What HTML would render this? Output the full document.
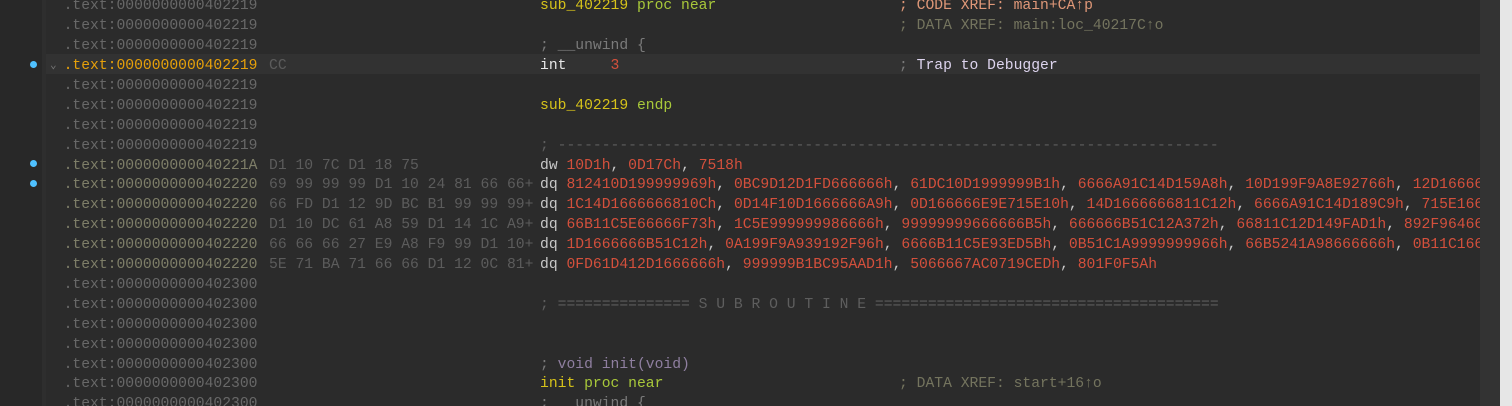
<!DOCTYPE html>
<html><head><meta charset="utf-8"><style>
html,body{margin:0;padding:0;}
body{width:1512px;height:406px;overflow:hidden;background:#2b2b2b;position:relative;font-family:"Liberation Mono","DejaVu Sans Mono",monospace;font-size:14.7px;}
#gut{position:absolute;left:0;top:0;width:42px;height:406px;background:#282828;}
#gut2{position:absolute;left:42px;top:0;width:4px;height:406px;background:#2e2e2e;}
#view{position:absolute;left:46px;top:0;width:1434px;height:406px;overflow:hidden;}
#sb{position:absolute;left:1480px;top:0;width:20px;height:406px;background:#333;}
#sb2{position:absolute;left:1500px;top:0;width:12px;height:406px;background:#e6e6e6;}
.r{position:absolute;left:0;height:19.9px;line-height:19.9px;white-space:pre;width:1434px;}
.hl{background:#323232;}
.a,.b,.c,.m{top:3px;}
.a{position:absolute;left:17.6px;color:#686868;}
.ad{color:#7e7e68;}
.ao{color:#e6a00a;}
.b{position:absolute;left:223px;color:#5c5c5c;}
.c{position:absolute;left:494px;color:#c8c8c8;}
.m{position:absolute;left:853px;}
.y{color:#d6c21a}.g{color:#a8c83a}.n{color:#d4503c}.w{color:#e6e6e6}.cm{color:#7a7a7a}.co{color:#e09878}.cd{color:#74745e}.lv{color:#ddd4ee}.pu{color:#8f7fa0}
.dot{position:absolute;left:30px;width:7px;height:7px;border-radius:50%;background:#4fc1ff;}
</style></head><body>
<div id="gut"></div><div id="gut2"></div>
<div class="dot" style="top:61px"></div>
<div class="dot" style="top:160px"></div>
<div class="dot" style="top:180px"></div>
<div id="view">
<div class="r" style="top:-5.7px"><span class="a">.text:0000000000402219</span><span class="c"><span class="y">sub_402219</span> <span class="g">proc near</span></span><span class="m co">; CODE XREF: main+CA↑p</span></div>
<div class="r" style="top:14.2px"><span class="a">.text:0000000000402219</span><span class="m cd">; DATA XREF: main:loc_40217C↑o</span></div>
<div class="r" style="top:34.1px"><span class="a">.text:0000000000402219</span><span class="c cm">; __unwind {</span></div>
<div class="r hl" style="top:54px"><span style="position:absolute;left:4px;top:3px;color:#777;font-size:11px">⌄</span><span class="a ao">.text:0000000000402219</span><span class="b">CC</span><span class="c"><span class="w">int</span>     <span class="n">3</span></span><span class="m"><span class="cm">;</span> <span class="lv">Trap to Debugger</span></span></div>
<div class="r" style="top:73.9px"><span class="a">.text:0000000000402219</span></div>
<div class="r" style="top:93.8px"><span class="a">.text:0000000000402219</span><span class="c"><span class="y">sub_402219</span> <span class="g">endp</span></span></div>
<div class="r" style="top:113.7px"><span class="a">.text:0000000000402219</span></div>
<div class="r" style="top:133.6px"><span class="a">.text:0000000000402219</span><span class="c" style="color:#5e5e5e">; ---------------------------------------------------------------------------</span></div>
<div class="r" style="top:153.5px"><span class="a ad">.text:000000000040221A</span><span class="b">D1 10 7C D1 18 75</span><span class="c">dw <span class="n">10D1h</span>, <span class="n">0D17Ch</span>, <span class="n">7518h</span></span></div>
<div class="r" style="top:173.4px"><span class="a ad">.text:0000000000402220</span><span class="b">69 99 99 99 D1 10 24 81 66 66+</span><span class="c">dq <span class="n">812410D199999969h</span>, <span class="n">0BC9D12D1FD666666h</span>, <span class="n">61DC10D1999999B1h</span>, <span class="n">6666A91C14D159A8h</span>, <span class="n">10D199F9A8E92766h</span>, <span class="n">12D1666666666666h</span></span></div>
<div class="r" style="top:193.3px"><span class="a ad">.text:0000000000402220</span><span class="b">66 FD D1 12 9D BC B1 99 99 99+</span><span class="c">dq <span class="n">1C14D1666666810Ch</span>, <span class="n">0D14F10D1666666A9h</span>, <span class="n">0D166666E9E715E10h</span>, <span class="n">14D1666666811C12h</span>, <span class="n">6666A91C14D189C9h</span>, <span class="n">715E1666666666h</span></span></div>
<div class="r" style="top:213.2px"><span class="a ad">.text:0000000000402220</span><span class="b">D1 10 DC 61 A8 59 D1 14 1C A9+</span><span class="c">dq <span class="n">66B11C5E66666F73h</span>, <span class="n">1C5E999999986666h</span>, <span class="n">99999999666666B5h</span>, <span class="n">666666B51C12A372h</span>, <span class="n">66811C12D149FAD1h</span>, <span class="n">892F9646666666h</span></span></div>
<div class="r" style="top:233.1px"><span class="a ad">.text:0000000000402220</span><span class="b">66 66 66 27 E9 A8 F9 99 D1 10+</span><span class="c">dq <span class="n">1D1666666B51C12h</span>, <span class="n">0A199F9A939192F96h</span>, <span class="n">6666B11C5E93ED5Bh</span>, <span class="n">0B51C1A9999999966h</span>, <span class="n">66B5241A98666666h</span>, <span class="n">0B11C1666666h</span></span></div>
<div class="r" style="top:253px"><span class="a ad">.text:0000000000402220</span><span class="b">5E 71 BA 71 66 66 D1 12 0C 81+</span><span class="c">dq <span class="n">0FD61D412D1666666h</span>, <span class="n">999999B1BC95AAD1h</span>, <span class="n">5066667AC0719CEDh</span>, <span class="n">801F0F5Ah</span></span></div>
<div class="r" style="top:272.9px"><span class="a">.text:0000000000402300</span></div>
<div class="r" style="top:292.8px"><span class="a">.text:0000000000402300</span><span class="c" style="color:#5e5e5e">; =============== S U B R O U T I N E =======================================</span></div>
<div class="r" style="top:312.7px"><span class="a">.text:0000000000402300</span></div>
<div class="r" style="top:332.6px"><span class="a">.text:0000000000402300</span></div>
<div class="r" style="top:352.5px"><span class="a">.text:0000000000402300</span><span class="c"><span class="cm">;</span> <span class="pu">void init(void)</span></span></div>
<div class="r" style="top:372.4px"><span class="a">.text:0000000000402300</span><span class="c"><span class="y">init</span> <span class="g">proc near</span></span><span class="m cd">; DATA XREF: start+16↑o</span></div>
<div class="r" style="top:392.3px"><span class="a">.text:0000000000402300</span><span class="c cm">; __unwind {</span></div>
</div>
<div id="sb"></div><div id="sb2"></div>
</body></html>
